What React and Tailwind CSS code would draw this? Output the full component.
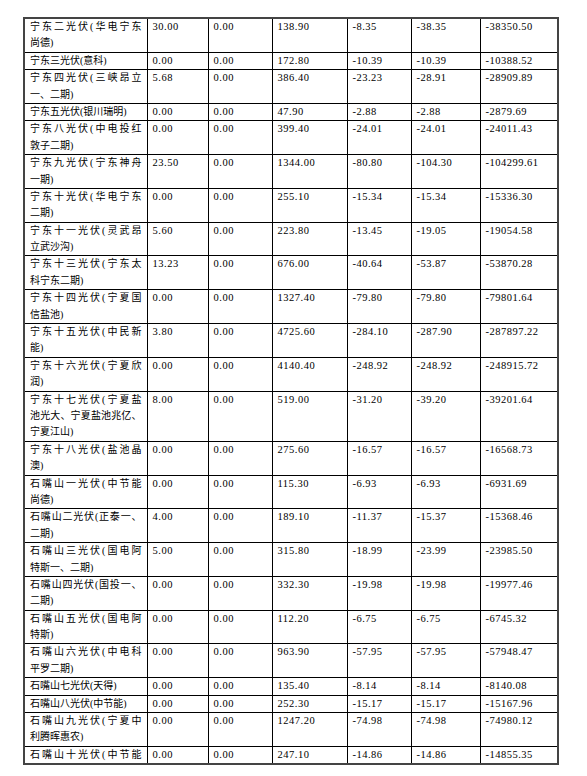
import React from 'react';

const rows = [
  [['宁东二光伏(华电宁东', '尚德)'], '30.00', '0.00', '138.90', '-8.35', '-38.35', '-38350.50'],
  [['宁东三光伏(意科)'], '0.00', '0.00', '172.80', '-10.39', '-10.39', '-10388.52'],
  [['宁东四光伏(三峡昂立', '一、二期)'], '5.68', '0.00', '386.40', '-23.23', '-28.91', '-28909.89'],
  [['宁东五光伏(银川瑞明)'], '0.00', '0.00', '47.90', '-2.88', '-2.88', '-2879.69'],
  [['宁东八光伏(中电投红', '敦子二期)'], '0.00', '0.00', '399.40', '-24.01', '-24.01', '-24011.43'],
  [['宁东九光伏(宁东神舟', '一期)'], '23.50', '0.00', '1344.00', '-80.80', '-104.30', '-104299.61'],
  [['宁东十光伏(华电宁东', '二期)'], '0.00', '0.00', '255.10', '-15.34', '-15.34', '-15336.30'],
  [['宁东十一光伏(灵武昂', '立武沙沟)'], '5.60', '0.00', '223.80', '-13.45', '-19.05', '-19054.58'],
  [['宁东十三光伏(宁东太', '科宁东二期)'], '13.23', '0.00', '676.00', '-40.64', '-53.87', '-53870.28'],
  [['宁东十四光伏(宁夏国', '信盐池)'], '0.00', '0.00', '1327.40', '-79.80', '-79.80', '-79801.64'],
  [['宁东十五光伏(中民新', '能)'], '3.80', '0.00', '4725.60', '-284.10', '-287.90', '-287897.22'],
  [['宁东十六光伏(宁夏欣', '润)'], '0.00', '0.00', '4140.40', '-248.92', '-248.92', '-248915.72'],
  [['宁东十七光伏(宁夏盐', '池光大、宁夏盐池兆亿、', '宁夏江山)'], '8.00', '0.00', '519.00', '-31.20', '-39.20', '-39201.64'],
  [['宁东十八光伏(盐池晶', '澳)'], '0.00', '0.00', '275.60', '-16.57', '-16.57', '-16568.73'],
  [['石嘴山一光伏(中节能', '尚德)'], '0.00', '0.00', '115.30', '-6.93', '-6.93', '-6931.69'],
  [['石嘴山二光伏(正泰一、', '二期)'], '4.00', '0.00', '189.10', '-11.37', '-15.37', '-15368.46'],
  [['石嘴山三光伏(国电阿', '特斯一、二期)'], '5.00', '0.00', '315.80', '-18.99', '-23.99', '-23985.50'],
  [['石嘴山四光伏(国投一、', '二期)'], '0.00', '0.00', '332.30', '-19.98', '-19.98', '-19977.46'],
  [['石嘴山五光伏(国电阿', '特斯)'], '0.00', '0.00', '112.20', '-6.75', '-6.75', '-6745.32'],
  [['石嘴山六光伏(中电科', '平罗二期)'], '0.00', '0.00', '963.90', '-57.95', '-57.95', '-57948.47'],
  [['石嘴山七光伏(天得)'], '0.00', '0.00', '135.40', '-8.14', '-8.14', '-8140.08'],
  [['石嘴山八光伏(中节能)'], '0.00', '0.00', '252.30', '-15.17', '-15.17', '-15167.96'],
  [['石嘴山九光伏(宁夏中', '利腾晖惠农)'], '0.00', '0.00', '1247.20', '-74.98', '-74.98', '-74980.12'],
  [['石嘴山十光伏(中节能'], '0.00', '0.00', '247.10', '-14.86', '-14.86', '-14855.35'],
];

const widths = ['w-[123px]', 'w-[61px]', 'w-[64px]', 'w-[75px]', 'w-[64px]', 'w-[69px]', 'w-[78px]'];

function NameCell({ lines, last }) {
  return (
    <td className="border border-black px-[5px] py-0 align-top text-[10px]">
      {lines.map((l, i) => (
        <div
          key={i}
          className={
            'h-[16.4px] leading-[16.4px] whitespace-nowrap ' +
            (i < lines.length - 1 || (last && lines.length === 1)
              ? 'text-justify [text-align-last:justify]'
              : '')
          }
        >
          {l}
        </div>
      ))}
    </td>
  );
}

export default function App() {
  return (
    <div
      className="min-h-[776px] w-[587px] bg-white pl-[23px] pt-[17px] text-black"
      style={{ fontFamily: '"Liberation Serif", "Noto Sans CJK SC", serif' }}
    >
      <table className="table-fixed border-collapse border-2 border-[#444] w-[536px]">
        <colgroup>
          {widths.map((w, i) => (
            <col key={i} className={w} />
          ))}
        </colgroup>
        <tbody>
          {rows.map((r, idx) => (
            <tr key={idx}>
              <NameCell lines={r[0]} last={idx === rows.length - 1} />
              {r.slice(1).map((v, j) => (
                <td
                  key={j}
                  className="border border-black px-[5px] py-0 align-top text-[10.5px] leading-[16.4px] tracking-[0.5px] whitespace-nowrap"
                >
                  <div className="h-[16.4px]">{v}</div>
                </td>
              ))}
            </tr>
          ))}
        </tbody>
      </table>
    </div>
  );
}
